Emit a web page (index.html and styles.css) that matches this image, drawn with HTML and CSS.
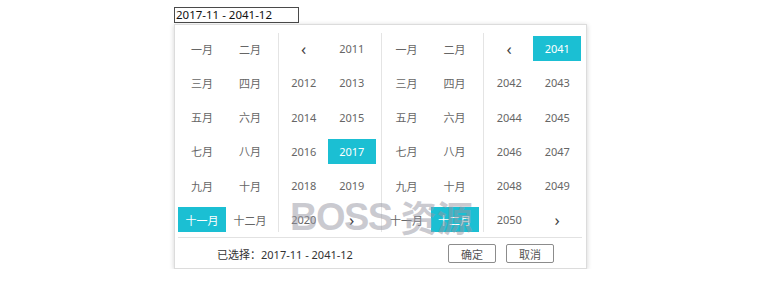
FILE: index.html
```html
<!DOCTYPE html>
<html>
<head>
<meta charset="utf-8">
<link rel="stylesheet" href="styles.css">
</head>
<body>
<div class="wrap">
  <div class="input">2017-11 - 2041-12</div>
  <div class="popup">
    <div class="panels">
      <div class="panel">
        <div class="cell">一月</div><div class="cell">二月</div>
        <div class="cell">三月</div><div class="cell">四月</div>
        <div class="cell">五月</div><div class="cell">六月</div>
        <div class="cell">七月</div><div class="cell">八月</div>
        <div class="cell">九月</div><div class="cell">十月</div>
        <div class="cell active">十一月</div><div class="cell">十二月</div>
      </div>
      <div class="panel div">
        <div class="cell arrow">&lsaquo;</div><div class="cell">2011</div>
        <div class="cell">2012</div><div class="cell">2013</div>
        <div class="cell">2014</div><div class="cell">2015</div>
        <div class="cell">2016</div><div class="cell active">2017</div>
        <div class="cell">2018</div><div class="cell">2019</div>
        <div class="cell">2020</div><div class="cell arrow">&rsaquo;</div>
      </div>
      <div class="panel div">
        <div class="cell">一月</div><div class="cell">二月</div>
        <div class="cell">三月</div><div class="cell">四月</div>
        <div class="cell">五月</div><div class="cell">六月</div>
        <div class="cell">七月</div><div class="cell">八月</div>
        <div class="cell">九月</div><div class="cell">十月</div>
        <div class="cell">十一月</div><div class="cell active">十二月</div>
      </div>
      <div class="panel div">
        <div class="cell arrow">&lsaquo;</div><div class="cell active">2041</div>
        <div class="cell">2042</div><div class="cell">2043</div>
        <div class="cell">2044</div><div class="cell">2045</div>
        <div class="cell">2046</div><div class="cell">2047</div>
        <div class="cell">2048</div><div class="cell">2049</div>
        <div class="cell">2050</div><div class="cell arrow">&rsaquo;</div>
      </div>
    </div>
    <div class="footer">
      <div class="selected">已选择：2017-11 - 2041-12</div>
      <div class="btns">
        <button class="btn">确定</button>
        <button class="btn">取消</button>
      </div>
    </div>
    <div class="watermark">BOSS<span class="wm-cn">资源</span></div>
  </div>
</div>
</body>
</html>
```
FILE: styles.css
```css
html, body {
  margin: 0;
  background: #fff;
}
body {
  font-family: "Noto Sans", "Noto Sans CJK SC", sans-serif;
}
.wrap {
  padding: 7px 0 0 174px;
}
.input {
  box-sizing: border-box;
  width: 125px;
  height: 16px;
  border: 1px solid #4a4a4a;
  font-size: 11.5px;
  line-height: 14px;
  padding-left: 1px;
  color: #111;
}
.popup {
  position: relative;
  box-sizing: border-box;
  width: 413px;
  height: 245px;
  margin: 1px 0 0 0;
  border: 1px solid #dcdcdc;
  box-shadow: 0 1px 5px rgba(0, 0, 0, 0.18);
  background: #fff;
}
.panels {
  display: flex;
  padding-top: 8px;
}
.panel {
  box-sizing: border-box;
  width: 103px;
  height: 199px;
  padding: 3px 3px 0 3px;
  display: grid;
  grid-template-columns: 48px 48px;
  grid-auto-rows: 25px;
  row-gap: 9.3px;
  align-content: start;
}
.panel.div {
  border-left: 1px solid #e4e4e4;
  padding-left: 1px;
}
.cell {
  display: flex;
  align-items: center;
  justify-content: center;
  font-size: 11px;
  color: #666;
}
.cell.arrow {
  font-size: 17px;
  color: #444;
}
.cell.active {
  background: #1bbfd3;
  color: #fff;
}
.footer {
  margin: 5px 4px 0 3px;
  border-top: 1px solid #e2e2e2;
  display: flex;
  align-items: center;
  justify-content: space-between;
  height: 30px;
}
.selected {
  margin-left: 39px;
  font-size: 11px;
  color: #333;
  padding-top: 1px;
}
.btns {
  display: flex;
  gap: 10px;
  margin-right: 28px;
  padding-top: 1px;
}
.btn {
  box-sizing: border-box;
  width: 48px;
  height: 19px;
  padding: 0;
  border: 1px solid #8c8c8c;
  border-radius: 2px;
  background: #fff;
  font-family: "Noto Sans CJK SC", sans-serif;
  font-size: 11px;
  color: #555;
}
.watermark {
  position: absolute;
  left: 115px;
  top: 173px;
  display: flex;
  align-items: center;
  font-family: "Liberation Sans", sans-serif;
  font-weight: bold;
  font-size: 38px;
  line-height: 38px;
  letter-spacing: -1.5px;
  color: rgba(150, 150, 162, 0.5);
  pointer-events: none;
  white-space: nowrap;
}
.wm-cn {
  font-family: "Noto Sans CJK SC", sans-serif;
  font-size: 36px;
  letter-spacing: 0;
  margin-left: 9px;
  margin-top: -3px;
}
```
